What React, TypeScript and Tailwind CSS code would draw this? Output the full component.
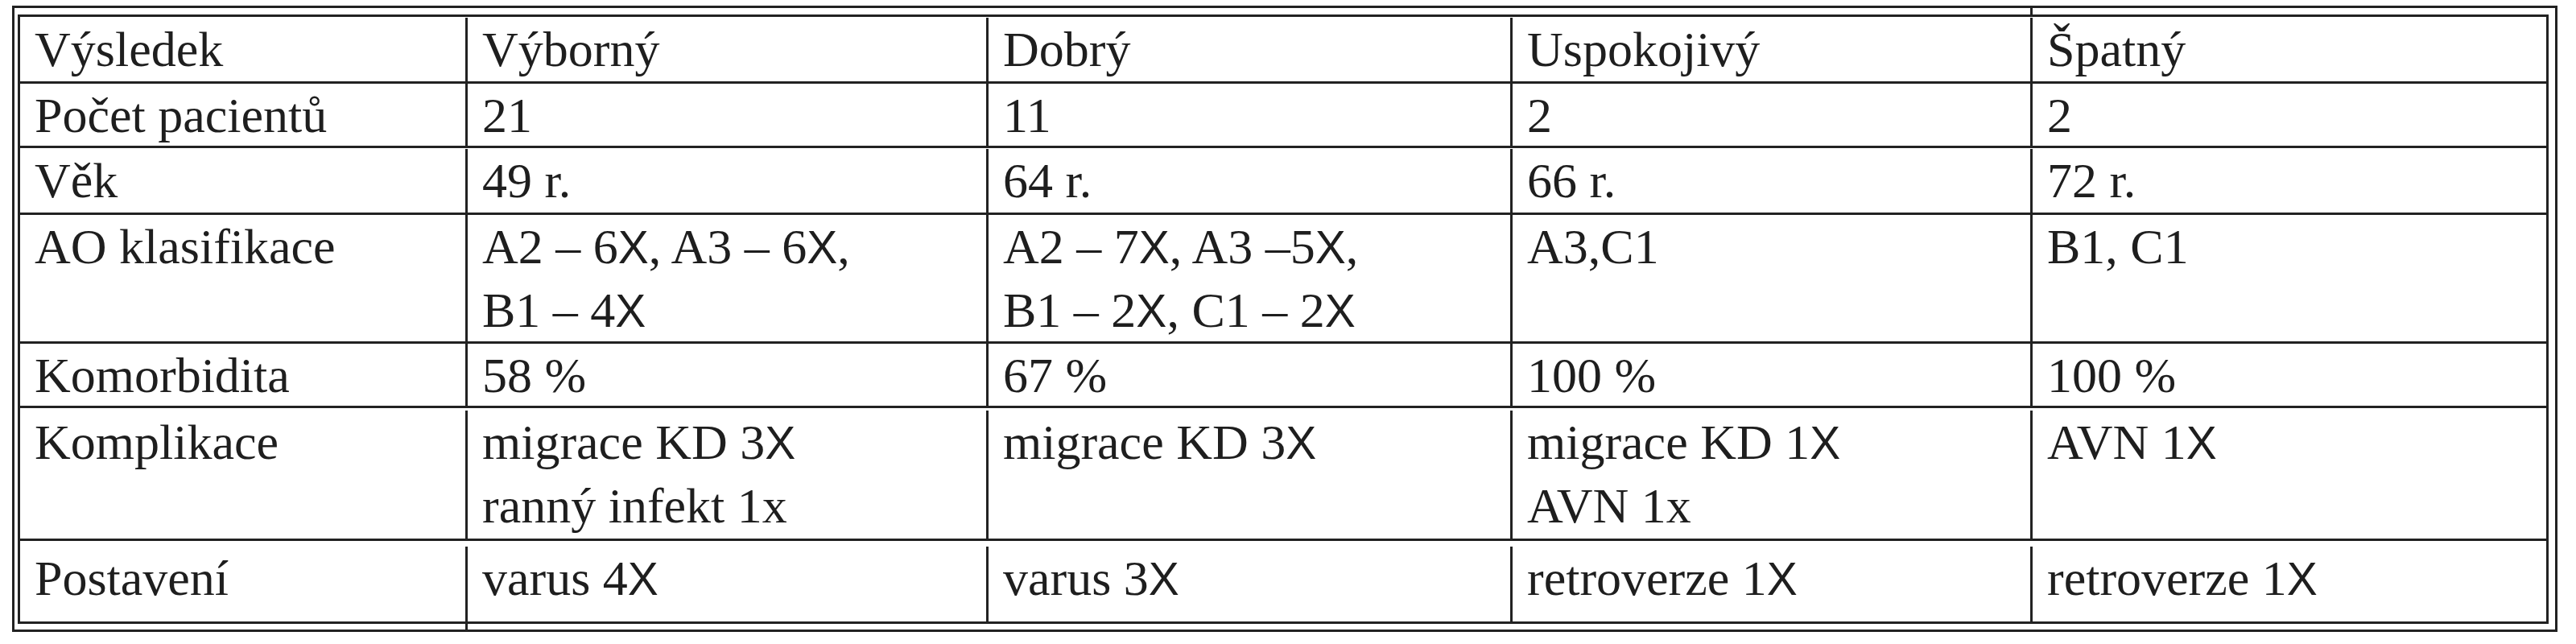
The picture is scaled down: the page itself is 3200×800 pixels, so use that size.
import type { ReactNode } from "react";

// the "x" in counts is set in a sans face in the source table
const X = () => (
  <span className="font-['Liberation_Sans',Arial,sans-serif] text-[57px]">X</span>
);

type Row = { height: string; cells: ReactNode[][] };

const rows: Row[] = [
  {
    height: "h-[83px] border-b-[3px] pt-[1px]",
    cells: [["Výsledek"], ["Výborný"], ["Dobrý"], ["Uspokojivý"], ["Špatný"]],
  },
  {
    height: "h-[80px] border-b-[3px]",
    cells: [["Počet pacientů"], ["21"], ["11"], ["2"], ["2"]],
  },
  {
    height: "h-[83px] border-b-[3px] pt-[1px]",
    cells: [["Věk"], ["49 r."], ["64 r."], ["66 r."], ["72 r."]],
  },
  {
    height: "h-[160px] border-b-[3px]",
    cells: [
      ["AO klasifikace"],
      [
        <>A2 – 6<X />, A3 – 6<X />,</>,
        <>B1 – 4<X /></>,
      ],
      [
        <>A2 – 7<X />, A3 –5<X />,</>,
        <>B1 – 2<X />, C1 – 2<X /></>,
      ],
      ["A3,C1"],
      ["B1, C1"],
    ],
  },
  {
    height: "h-[80px] border-b-[3px]",
    cells: [["Komorbidita"], ["58 %"], ["67 %"], ["100 %"], ["100 %"]],
  },
  {
    height: "h-[165px] border-b-[3px] pt-[3px]",
    cells: [
      ["Komplikace"],
      [<>migrace KD 3<X /></>, "ranný infekt 1x"],
      [<>migrace KD 3<X /></>],
      [<>migrace KD 1<X /></>, "AVN 1x"],
      [<>AVN 1<X /></>],
    ],
  },
  {
    height: "h-[100px] pt-[7px]",
    cells: [
      ["Postavení"],
      [<>varus 4<X /></>],
      [<>varus 3<X /></>],
      [<>retroverze 1<X /></>],
      [<>retroverze 1<X /></>],
    ],
  },
];

export default function App() {
  return (
    <div className="min-h-[800px] bg-white pl-[15px] pt-[7px] font-['Liberation_Serif','Times_New_Roman',serif] text-[62px] text-[#1e1e1e]">
      <div className="relative w-fit border-[3px] border-[#222] pl-[4px] pt-[8px] pr-[8px] pb-[7px]">
        {/* little stubs of the column rules that cross the gap */}
        <div className="absolute left-[2504px] top-0 h-[8px] w-[3px] bg-[#222]" />
        <div className="absolute left-[560px] bottom-0 h-[7px] w-[3px] bg-[#222]" />

        <div className="w-[3144px] border-[3px] border-[#222]">
          {rows.map((row, r) => (
            <div
              key={r}
              className={`grid grid-cols-[556px_647px_651px_646px_638px] border-[#222] ${row.height}`}
            >
              {row.cells.map((lines, c) => (
                <div
                  key={c}
                  className={`whitespace-nowrap pl-[18px] leading-[78px] ${
                    c < 4 ? "border-r-[3px] border-[#222]" : ""
                  }`}
                >
                  {lines.map((line, i) => (
                    <div key={i}>{line}</div>
                  ))}
                </div>
              ))}
            </div>
          ))}
        </div>
      </div>
    </div>
  );
}
